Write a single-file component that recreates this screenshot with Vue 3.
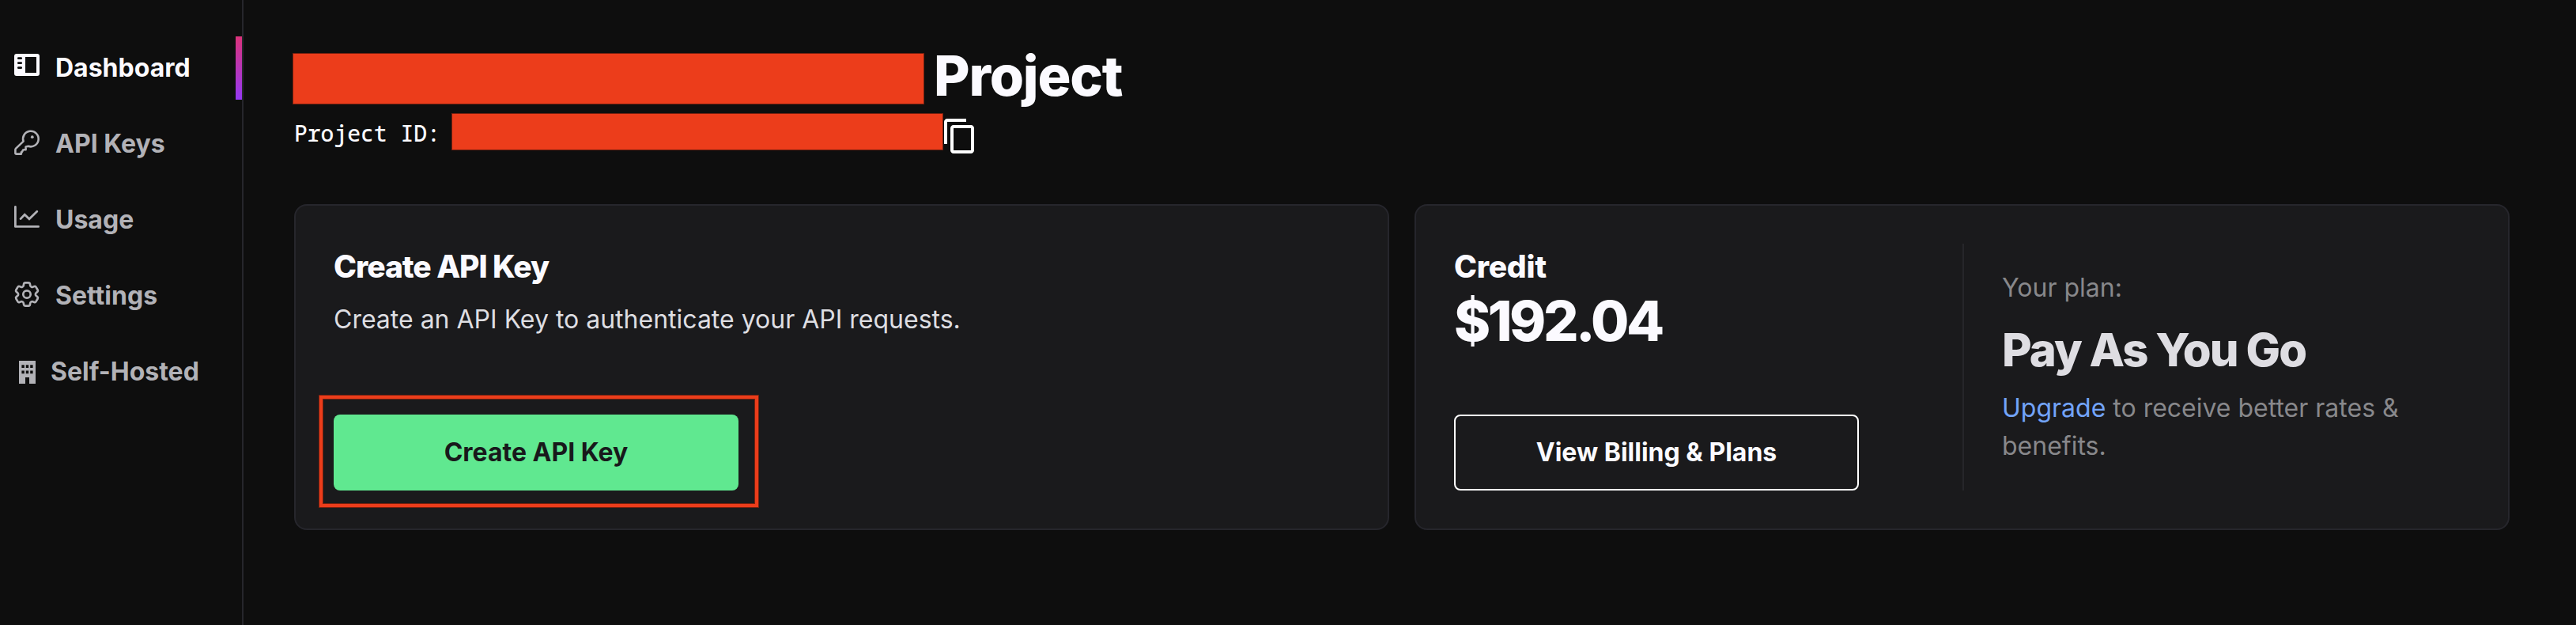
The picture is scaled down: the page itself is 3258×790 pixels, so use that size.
<script setup>
const navItems = [
  { label: 'Dashboard', icon: 'layout', active: true },
  { label: 'API Keys', icon: 'key' },
  { label: 'Usage', icon: 'chart' },
  { label: 'Settings', icon: 'gear' },
  { label: 'Self-Hosted', icon: 'building' },
]
</script>

<template>
  <div class="page">
    <nav class="sidebar">
      <a v-for="item in navItems" :key="item.label" class="nav-item" :class="[item.icon, { active: item.active }]">
        <svg v-if="item.icon === 'layout'" class="icon" viewBox="0 0 32 32">
          <path fill="currentColor" fill-rule="evenodd" d="M3 0h26a3 3 0 0 1 3 3v22a3 3 0 0 1-3 3H3a3 3 0 0 1-3-3V3a3 3 0 0 1 3-3zM14 4v20h14V4z" />
          <g fill="#0e0e0e">
            <rect x="4" y="4.2" width="6" height="2.8" rx="1.3" />
            <rect x="4" y="10.2" width="6" height="2.8" rx="1.3" />
            <rect x="4" y="16.2" width="6" height="2.8" rx="1.3" />
          </g>
        </svg>
        <svg v-else-if="item.icon === 'key'" class="icon" viewBox="0 0 32 32" fill="none" stroke="currentColor" stroke-width="2.6" stroke-linejoin="round">
          <path d="M11.6 14.6A9.8 9.8 0 1 1 17.8 20.8L14.6 21.6V25.2H12.2Q10.9 25.2 10.7 26.4L9.8 28.2H8.9V30.6H2.8Q1.4 30.6 1.4 29.2V25.3Q1.4 24.4 2.1 23.7z" />
          <circle cx="22.8" cy="9.2" r="1.9" fill="currentColor" stroke="none" />
        </svg>
        <svg v-else-if="item.icon === 'chart'" class="icon" viewBox="0 0 32 32" fill="none" stroke="currentColor" stroke-width="2.8" stroke-linecap="round" stroke-linejoin="round">
          <path d="M1.4 1.4v25h29.2" />
          <path d="M8 16.6l5.2-5.4 5.8 5.6L28.8 7.2" stroke-linejoin="miter" />
        </svg>
        <svg v-else-if="item.icon === 'gear'" class="icon" viewBox="2.12 2.12 19.76 19.76" fill="none" stroke="currentColor" stroke-width="1.65" stroke-linejoin="round">
          <path d="M9.594 3.94c.09-.542.56-.94 1.11-.94h2.593c.55 0 1.02.398 1.11.94l.213 1.281c.063.374.313.686.645.87.074.04.147.083.22.127.325.196.72.257 1.075.124l1.217-.456a1.125 1.125 0 0 1 1.37.49l1.296 2.247a1.125 1.125 0 0 1-.26 1.431l-1.003.827c-.293.241-.438.613-.43.992a7.723 7.723 0 0 1 0 .255c-.008.378.137.75.43.991l1.004.827c.424.35.534.955.26 1.43l-1.298 2.247a1.125 1.125 0 0 1-1.369.491l-1.217-.456c-.355-.133-.75-.072-1.076.124a6.47 6.47 0 0 1-.22.128c-.331.183-.581.495-.644.869l-.213 1.281c-.09.543-.56.94-1.11.94h-2.594c-.55 0-1.019-.398-1.11-.94l-.213-1.281c-.062-.374-.312-.686-.644-.87a6.52 6.52 0 0 1-.22-.127c-.325-.196-.72-.257-1.076-.124l-1.217.456a1.125 1.125 0 0 1-1.369-.49l-1.297-2.247a1.125 1.125 0 0 1 .26-1.431l1.004-.827c.292-.24.437-.613.43-.991a6.932 6.932 0 0 1 0-.255c.007-.38-.138-.751-.43-.992l-1.004-.827a1.125 1.125 0 0 1-.26-1.43l1.297-2.247a1.125 1.125 0 0 1 1.37-.491l1.216.456c.356.133.751.072 1.076-.124.072-.044.146-.086.22-.128.332-.183.582-.495.644-.869l.214-1.28Z" />
          <circle cx="12" cy="12" r="2.9" />
        </svg>
        <svg v-else class="icon" viewBox="0 0 32 32">
          <path fill="currentColor" fill-rule="evenodd" d="M6 4h21v29h-8v-8h-5v8H6zM9.4 9.3h3.4v3.6H9.4zM14.8 9.3h3.4v3.6h-3.4zM20.2 9.3h3.4v3.6h-3.4zM9.4 16.6h3.4v3.6H9.4zM14.8 16.6h3.4v3.6h-3.4zM20.2 16.6h3.4v3.6h-3.4z" />
        </svg>
        <span>{{ item.label }}</span>
      </a>
    </nav>

    <main class="main">
      <header>
        <div class="title-row">
          <div class="redacted name"></div>
          <h1>Project</h1>
        </div>
        <div class="id-row">
          <span class="id-label">Project ID:</span>
          <div class="redacted id"></div>
          <svg class="copy" viewBox="0 0 24 24" fill="#fff">
            <path d="M16 1H4c-1.1 0-2 .9-2 2v14h2V3h12V1zm3 4H8c-1.1 0-2 .9-2 2v14c0 1.1.9 2 2 2h11c1.1 0 2-.9 2-2V7c0-1.1-.9-2-2-2zm0 16H8V7h11v14z" />
          </svg>
        </div>
      </header>

      <section class="cards">
        <article class="card">
          <h2 class="tight">Create API Key</h2>
          <p class="desc">Create an API Key to authenticate your API requests.</p>
          <div class="action">
            <button class="btn primary">Create API Key</button>
            <div class="highlight"></div>
          </div>
        </article>

        <article class="card split">
          <div class="credit">
            <h2>Credit</h2>
            <div class="amount">$192.04</div>
            <div class="action"><button class="btn outline">View Billing &amp; Plans</button></div>
          </div>
          <div class="plan">
            <p>Your plan:</p>
            <h3>Pay As You Go</h3>
            <p><a class="link">Upgrade</a> to receive better rates &amp; benefits.</p>
          </div>
        </article>
      </section>
    </main>
  </div>
</template>

<style>
body {
  background: #0e0e0e;
}
</style>

<style scoped>
.page {
  display: flex;
  width: 3258px;
  height: 790px;
  overflow: hidden;
  box-sizing: border-box;
  background: #0e0e0e;
  color: #fbfaff;
  font-family: Inter, 'Liberation Sans', sans-serif;
  font-size: 32px;
}
h1, h2, h3, p {
  margin: 0;
}
.sidebar {
  display: flex;
  flex-direction: column;
  gap: 16px;
  flex: none;
  box-sizing: border-box;
  width: 308px;
  padding-top: 46px;
  border-right: 2px solid #26262c;
}
.nav-item {
  display: flex;
  align-items: center;
  gap: 20px;
  height: 80px;
  box-sizing: border-box;
  padding-left: 18px;
  border-right: 8px solid transparent;
  color: #b2b2b7;
  font-weight: 700;
  line-height: 80px;
}
.nav-item.active {
  color: #fbfaff;
  border-image: linear-gradient(#dc3379, #9438f5) 1;
  border-width: 0 8px 0 0;
  border-style: solid;
}
.nav-item.building {
  gap: 14px;
}
.icon {
  flex: none;
  width: 32px;
  height: 32px;
  margin-top: -4px;
  overflow: visible;
}
.main {
  width: 2802px;
  padding: 53px 0 0 64px;
}
.title-row {
  display: flex;
  align-items: flex-start;
  height: 85px;
}
h1 {
  margin-left: 12px;
  font-size: 70px;
  font-weight: 800;
  line-height: 85px;
  letter-spacing: -1.2px;
}
.redacted {
  flex: none;
  box-sizing: border-box;
  background: #ec3d1b;
  border: 1px solid #74200f;
}
.redacted.name {
  width: 799px;
  height: 65px;
  margin: 14px 0 0 -2px;
}
.id-row {
  display: flex;
  align-items: flex-start;
  height: 53px;
  margin-top: 5px;
}
.id-label {
  width: 199px;
  padding-top: 6px;
  font: 500 28px/38px 'Noto Sans Mono', 'DejaVu Sans Mono', monospace;
  white-space: pre;
}
.redacted.id {
  position: relative;
  width: 622px;
  height: 47px;
}
.copy {
  width: 48px;
  height: 48px;
  margin: 5px 0 0 -3px;
}
.cards {
  display: grid;
  grid-template-columns: 1385px 1385px;
  gap: 32px;
  margin-top: 62px;
}
.card {
  display: flex;
  flex-direction: column;
  box-sizing: border-box;
  height: 412px;
  padding: 48px;
  background: #1a1a1c;
  border: 2px solid #26262c;
  border-radius: 16px;
}
.card.split {
  flex-direction: row;
}
h2 {
  font-size: 39px;
  font-weight: 800;
  line-height: 57px;
  letter-spacing: -0.3px;
}
h2.tight {
  letter-spacing: -1.05px;
}
.desc {
  margin-top: 15px;
  color: #dedee2;
  line-height: 48px;
}
.action {
  position: relative;
  width: 512px;
  margin-top: auto;
}
.btn {
  display: block;
  box-sizing: border-box;
  width: 512px;
  height: 96px;
  padding: 0;
  border: 0;
  border-radius: 8px;
  font: 700 32px/96px Inter, 'Liberation Sans', sans-serif;
  text-align: center;
}
.btn.primary {
  background: #60e890;
  color: #18191b;
}
.btn.outline {
  border: 2px solid #fff;
  background: transparent;
  color: #fbfaff;
  line-height: 92px;
}
.highlight {
  position: absolute;
  inset: -24px -25px -21px -18px;
  border: 4px solid #ec3d1b;
  box-shadow: 0 0 0 1px #74200f, inset 0 0 0 1px #74200f;
}
.credit {
  display: flex;
  flex-direction: column;
  box-sizing: border-box;
  width: 645px;
  border-right: 2px solid #26262a;
}
.amount {
  margin-top: -2px;
  font-size: 70px;
  font-weight: 800;
  line-height: 85px;
  letter-spacing: -3.5px;
}
.plan {
  display: flex;
  flex: 1;
  flex-direction: column;
  justify-content: center;
  padding-left: 48px;
  color: #88888b;
  line-height: 48px;
}
h3 {
  margin: 19px 0 15px;
  color: #dedde2;
  font-size: 58px;
  font-weight: 800;
  line-height: 70px;
  letter-spacing: -1.95px;
}
.link {
  color: #72a4fa;
}
</style>
